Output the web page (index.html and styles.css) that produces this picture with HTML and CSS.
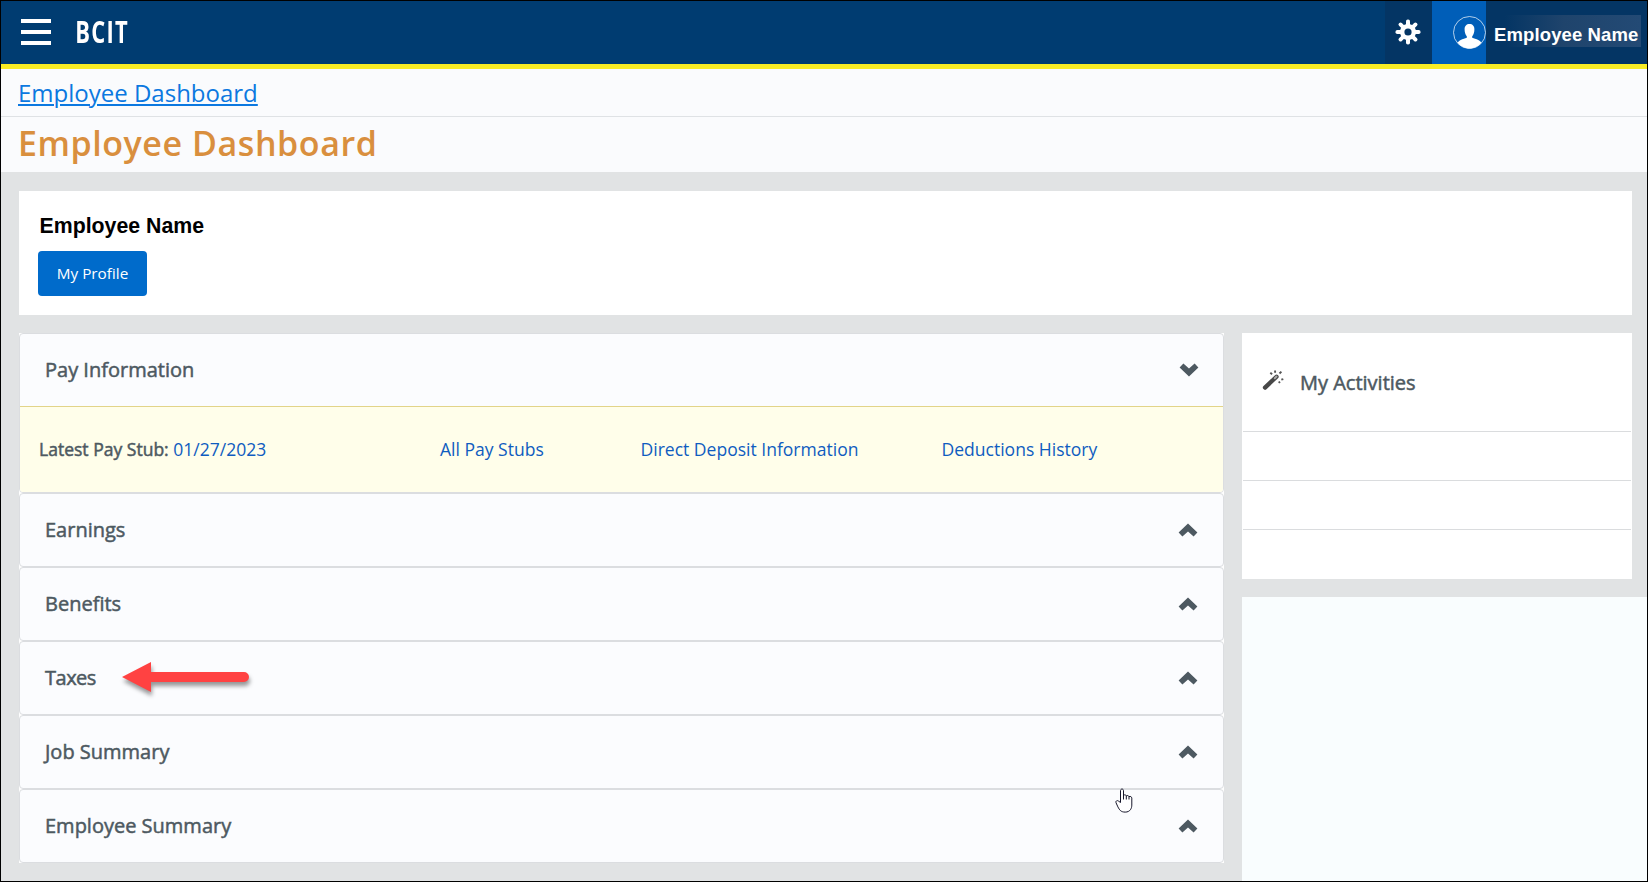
FILE: index.html
```
<!DOCTYPE html>
<html lang="en">
<head>
<meta charset="utf-8">
<title>Employee Dashboard</title>
<link rel="stylesheet" href="styles.css">
</head>
<body>
<svg width="0" height="0" class="defs">
  <symbol id="chev" viewBox="0 0 20 14"><path d="M0.600 9.600 10 0.400 19.400 9.600 15.600 13.600 10 8.400 4.400 13.600Z" fill="#4d5961"/></symbol>
</svg>
<div class="app">
  <header class="topbar">
    <div class="menu"><span></span><span></span><span></span></div>
    <div class="brand">BCIT</div>
    <div class="gear">
      <svg width="26" height="26" viewBox="-13 -13 26 26">
        <g fill="#fff">
          <g id="teeth"><rect x="-2" y="-12.5" width="4" height="25" rx="1.8"/><rect x="-12.5" y="-2" width="25" height="4" rx="1.8"/></g>
          <use href="#teeth" transform="rotate(45)"/>
          <circle r="8"/>
        </g>
        <circle r="3.6" fill="#043564"/>
      </svg>
    </div>
    <div class="avatar">
      <svg width="34" height="34" viewBox="0 0 34 34">
        <circle cx="17.500" cy="17.500" r="16" fill="none" stroke="#fff" stroke-width=".7"/>
        <path d="M17.500 9c3 0 4.900 2 4.900 5.300 0 3-.8 5.500-2.200 6.900v1.600c2.500.9 6.500 1.700 9.300 4.700C27 31 22.500 33.500 17.500 33.500S8 31 5.500 27.500c2.800-3 6.800-3.800 9.300-4.700v-1.600c-1.400-1.400-2.200-3.900-2.200-6.900C12.600 11 14.500 9 17.500 9Z" fill="#fff"/>
      </svg>
    </div>
    <div class="user"><span class="user-name">Employee Name</span></div>
  </header>
  <nav class="crumbs"><a class="crumb" href="#">Employee Dashboard</a></nav>
  <div class="titlebar"><h1 class="title">Employee Dashboard</h1></div>
  <main class="content">
    <section class="profile">
      <h2 class="profile-name">Employee Name</h2>
      <button class="btn"><span>My Profile</span></button>
    </section>
    <div class="columns">
      <div class="accordion">
        <section class="item open">
          <div class="head"><span class="label">Pay Information</span><svg class="chev down"><use href="#chev"/></svg></div>
          <div class="pay">
            <div class="stub"><span class="stub-label">Latest Pay Stub:</span> <a href="#" class="date">01/27/2023</a></div>
            <a href="#" class="all">All Pay Stubs</a>
            <a href="#" class="deposit">Direct Deposit Information</a>
            <a href="#" class="history">Deductions History</a>
          </div>
        </section>
        <section class="item"><div class="head"><span class="label">Earnings</span><svg class="chev"><use href="#chev"/></svg></div></section>
        <section class="item"><div class="head"><span class="label">Benefits</span><svg class="chev"><use href="#chev"/></svg></div></section>
        <section class="item"><div class="head"><span class="label taxes">Taxes</span><svg class="chev"><use href="#chev"/></svg></div></section>
        <section class="item"><div class="head"><span class="label">Job Summary</span><svg class="chev"><use href="#chev"/></svg></div></section>
        <section class="item"><div class="head"><span class="label">Employee Summary</span><svg class="chev"><use href="#chev"/></svg></div></section>
      </div>
      <aside class="side">
        <section class="activities">
          <div class="act-head">
            <svg width="22" height="20" viewBox="0 0 22 20">
              <path d="M3 17.600 14.500 6.800" stroke="#484848" stroke-width="4.300" stroke-linecap="round"/>
              <path d="M12.800 8.200 14.500 6.600" stroke="#aaa" stroke-width="2" stroke-linecap="round"/>
              <path d="M8.300 2.700l1.800 1.500M13.100.6v2.200M19.400 1.600l-1.900 1.900M19.300 9.700l2-.6M16.800 11.500l1.100 1.500" stroke="#555" stroke-width="1.900"/>
            </svg>
            <span class="act-label">My Activities</span>
          </div>
          <div class="act-row"></div><div class="act-row"></div><div class="act-row"></div>
        </section>
        <div class="filler"></div>
      </aside>
    </div>
  </main>
  <svg class="arrow" width="136" height="44" viewBox="0 0 136 44"><path d="M5 19 34 4v10h93a5 5 0 0 1 0 10H34v10Z" fill="#ff4242"/></svg>
  <svg class="hand" width="18" height="26" viewBox="0 0 18 26"><path d="M5.500 14.500V2.700c0-2.200 3-2.200 3 0v4.600c1-.8 2.500-.5 2.800.5 1-.6 2.400-.2 2.700.8 1.300-.5 2.800.1 2.800 1.500v7c0 3-1.500 7-6.600 7-4.500 0-5.700-2.300-7.300-5.200L1 14.700c-.7-1.600 1.300-2.800 2.500-1.600Z" fill="#fff" stroke="#15152a"/><path d="M8.500 7v4.500M11.300 8v3.500M14 8.500v3" stroke="#15152a"/></svg>
</div>
</body>
</html>
```

FILE: styles.css
```
* { box-sizing: border-box; }
body { margin: 0; font-family: "Open Sans", sans-serif; color: #4d5961; }
a { color: #0f5cc0; text-decoration: none; }
.defs { position: absolute; }
.app { position: relative; display: flex; flex-direction: column; width: 1648px; height: 882px; border: 1px solid #000; background: #e1e3e4; overflow: hidden; }
.topbar { display: flex; flex: none; height: 68px; background: #003c71; border-bottom: 5px solid #f8ec25; }
.menu { display: flex; flex-direction: column; gap: 7px; width: 50px; padding: 18px 0 0 20px; }
.menu span { height: 4px; background: #fff; }
.brand { flex: 1; padding-left: 25px; font-size: 30px; line-height: 61px; font-weight: 700; letter-spacing: 1.800px; color: #fff; transform: scaleX(.73); transform-origin: 22px 0; }
.gear { width: 47px; padding: 18px 0 0 10px; background: #043564; }
.avatar { width: 54px; padding: 14px 0 0 20px; background: #005eb8; }
.user { width: 161px; padding-top: 14px; background: #043564; }
.user-name { display: block; width: 155px; height: 32px; padding-left: 8px; font: 700 18.500px/39px "Liberation Sans", sans-serif; letter-spacing: .12px; white-space: nowrap; color: #fff; background: linear-gradient(90deg, #20466f00 12%, #1f446c 50%, #234a75); }
.crumbs { flex: none; height: 48px; padding-left: 17px; background: #fafbfd; border-bottom: 1px solid #dfe2e5; line-height: 48px; }
.crumb { font-size: 24px; color: #0b78e0; text-decoration: underline; text-decoration-thickness: 2px; text-underline-offset: 2px; }
.titlebar { flex: none; height: 55px; padding-left: 17px; background: #fafbfd; }
.title { margin: 0; font-size: 34px; line-height: 53px; font-weight: 600; letter-spacing: .560px; color: #d98f3e; }
.content { display: flex; flex-direction: column; gap: 18px; flex: 1; padding: 19px 0 0 18px; }
.profile { width: 1613px; height: 124px; padding: 22px 0 0 19px; background: #fff; }
.profile-name { margin: 0 0 11px 1.500px; font: 700 21.300px/27px "Liberation Sans", sans-serif; color: #000; }
.btn { display: block; width: 109px; height: 45px; padding: 0 0 1px; border: 0; border-radius: 4px; background: #006bcb; color: #fff; font: 15.300px "Open Sans", sans-serif; }
.columns { display: flex; gap: 18px; flex: 1; }
.accordion { width: 1205px; height: 530px; background: #fff; }
.item { height: 74px; border: 1px solid #dbdde0; border-radius: 4px; background: #fbfcfe; overflow: hidden; }
.open { height: 160px; }
.head { display: flex; align-items: center; justify-content: space-between; height: 72px; padding: 0 25px 2px; }
.label { font-size: 20px; -webkit-text-stroke: .5px; }
.taxes { letter-spacing: -.5px; }
.chev { width: 20px; height: 14px; margin: 2px 0 0; }
.down { transform: rotate(180deg); margin: 1px -1px 0 0; }
.pay { display: grid; grid-template-columns: 401px 200.500px 301px 1fr; align-items: center; height: 86px; padding: 0 0 2px 19px; border-top: 1px solid #e2d489; background: #fffeea; font-size: 17.550px; }
.stub-label { -webkit-text-stroke: .5px; }
.side { display: flex; flex-direction: column; gap: 18px; width: 405px; }
.activities { width: 390px; height: 246px; background: #fff; }
.act-head { display: flex; gap: 16px; height: 98px; padding: 37px 0 0 20px; }
.act-label { font-size: 20px; line-height: 25px; -webkit-text-stroke: .5px; }
.act-row { height: 49px; margin: 0 1px; border-top: 1px solid #dadcde; }
.filler { flex: 1; background: #f9fdfe; }
.arrow { position: absolute; left: 116px; top: 657px; filter: drop-shadow(1px 4px 2px rgba(0,0,0,.4)); }
.hand { position: absolute; left: 1113.500px; top: 786.500px; fill: none; }
```
